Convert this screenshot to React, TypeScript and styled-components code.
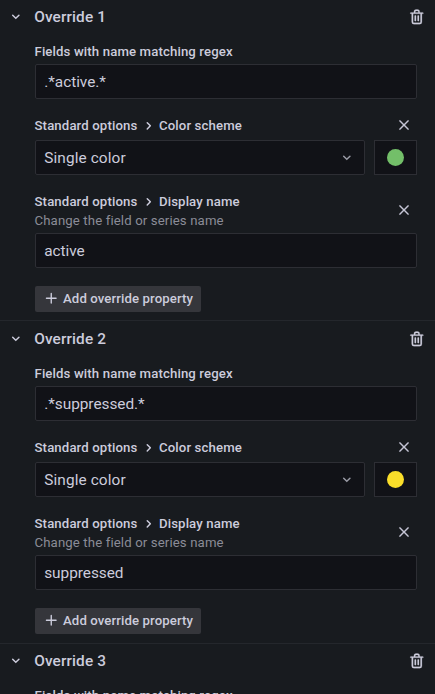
import React from 'react';
import styled, { createGlobalStyle } from 'styled-components';

const GlobalStyle = createGlobalStyle`
  * { box-sizing: border-box; }
  html, body { margin: 0; height: 100%; overflow: hidden; background: #181b1f; }
  body {
    font-family: Roboto, "Liberation Sans", sans-serif;
    color: #ccccdc;
  }
  button, input { font: inherit; color: inherit; letter-spacing: inherit; }
`;

const icons = {
  down: 'M17,9.17a1,1,0,0,0-1.41,0L12,12.71,8.46,9.17a1,1,0,0,0-1.41,0,1,1,0,0,0,0,1.42l4.24,4.24a1,1,0,0,0,1.42,0L17,10.59A1,1,0,0,0,17,9.17Z',
  right:
    'M14.83,11.29,10.59,7.05a1,1,0,0,0-1.42,0,1,1,0,0,0,0,1.41L12.71,12,9.17,15.54a1,1,0,0,0,0,1.41,1,1,0,0,0,.71.29,1,1,0,0,0,.71-.29l4.24-4.24A1,1,0,0,0,14.83,11.29Z',
  times:
    'M13.41,12l6.3-6.29a1,1,0,1,0-1.42-1.42L12,10.59,5.71,4.29A1,1,0,0,0,4.29,5.71L10.59,12l-6.3,6.29a1,1,0,0,0,0,1.42,1,1,0,0,0,1.42,0L12,13.41l6.29,6.3a1,1,0,0,0,1.42,0,1,1,0,0,0,0-1.42Z',
  plus: 'M19,11H13V5a1,1,0,0,0-2,0v6H5a1,1,0,0,0,0,2h6v6a1,1,0,0,0,2,0V13h6a1,1,0,0,0,0-2Z',
  trash:
    'M10,18a1,1,0,0,0,1-1V11a1,1,0,0,0-2,0v6A1,1,0,0,0,10,18ZM20,6H16V5a3,3,0,0,0-3-3H11A3,3,0,0,0,8,5V6H4A1,1,0,0,0,4,8H5V19a3,3,0,0,0,3,3h8a3,3,0,0,0,3-3V8h1a1,1,0,0,0,0-2ZM10,5a1,1,0,0,1,1-1h2a1,1,0,0,1,1,1V6H10Zm7,14a1,1,0,0,1-1,1H8a1,1,0,0,1-1-1V8H17Zm-3-1a1,1,0,0,0,1-1V11a1,1,0,0,0-2,0v6A1,1,0,0,0,14,18Z',
};

const Svg = styled.svg<{ $size: number; $weight: number }>`
  display: block;
  flex: none;
  width: ${(p) => p.$size}px;
  height: ${(p) => p.$size}px;
  fill: currentColor;
  stroke: currentColor;
  stroke-width: ${(p) => p.$weight};
`;

const Icon = ({ name, size, weight = 0 }: { name: keyof typeof icons; size: number; weight?: number }) => (
  <Svg $size={size} $weight={weight} viewBox="0 0 24 24" aria-hidden="true">
    <path d={icons[name]} />
  </Svg>
);

const Panel = styled.main`
  height: 694px;
  overflow: hidden;
`;

const Group = styled.section`
  height: 322px;
  &:not(:first-child) { border-top: 1px solid #24272c; }
  &:first-child { height: 320px; }
  &:nth-child(2) { height: 323px; }
`;

const Header = styled.header`
  display: flex;
  align-items: center;
  height: 34px;
  padding: 0 9.5px 0 7px;
  ${Group}:not(:first-child) & { height: 35px; }
  ${Group}:nth-child(3) & { height: 34px; }
`;

const Title = styled.h2`
  flex: 1;
  margin: 0 0 0 9.6px;
  font-size: 15.4px;
  line-height: 22px;
  font-weight: 500;
  letter-spacing: 0.12px;
`;

const IconButton = styled.button`
  display: flex;
  padding: 0;
  border: 0;
  background: none;
`;

const RemoveIconButton = styled(IconButton)<{ $lift: number }>`
  margin-bottom: ${(p) => p.$lift}px;
`;

const Body = styled.div`
  display: flex;
  flex-direction: column;
  padding: 9px 18px 0 35px;
`;

const Label = styled.div`
  display: flex;
  align-items: center;
  height: 18px;
  margin-left: -0.5px;
  font-size: 13.2px;
  line-height: 18px;
  font-weight: 500;
  letter-spacing: 0.125px;
`;

const Separator = styled.span`
  display: flex;
  margin: 0 1.5px 0 2.5px;
`;

const Hint = styled.div`
  height: 19px;
  margin-left: -0.5px;
  font-size: 13.2px;
  line-height: 19px;
  letter-spacing: 0.125px;
  color: #8b8c97;
`;

const Input = styled.input`
  display: block;
  width: 100%;
  height: 35px;
  padding: 0 8.2px;
  border: 1px solid #2d2e34;
  border-radius: 2px;
  outline: 0;
  background: #111217;
  font-size: 15.4px;
  letter-spacing: -0.04px;
`;

const MatcherInput = styled(Input)`
  margin-top: 3px;
`;

const PropertyHead = styled.div<{ $top: number; $height: number }>`
  display: flex;
  align-items: center;
  justify-content: space-between;
  height: ${(p) => p.$height}px;
  margin-top: ${(p) => p.$top}px;
  padding-right: 6.4px;
`;

const SelectRow = styled.div`
  display: flex;
  gap: 9px;
  margin-top: 5px;
`;

const Select = styled.div`
  display: flex;
  flex: 1;
  align-items: center;
  justify-content: space-between;
  height: 35px;
  padding: 0 8.5px 0 8.2px;
  border: 1px solid #2d2e34;
  border-radius: 2px;
  background: #111217;
  font-size: 15.4px;
  letter-spacing: 0.11px;
`;

const SelectArrow = styled.span`
  padding-top: 1px;
  color: #9a9ba6;
`;

const ColorBox = styled.button`
  display: flex;
  align-items: center;
  justify-content: center;
  width: 43px;
  height: 35px;
  padding: 0;
  border: 1px solid #2d2e34;
  background: #111217;
`;

const Swatch = styled.span<{ $color: string }>`
  width: 17px;
  height: 17px;
  border-radius: 50%;
  background: ${(p) => p.$color};
`;

const ValueInput = styled(Input)`
  margin-top: 3px;
`;

const AddButton = styled.button`
  display: flex;
  align-items: center;
  align-self: flex-start;
  gap: 4px;
  width: 166px;
  height: 26px;
  margin-top: 18px;
  padding: 0 0 1px 7.5px;
  border: 0;
  border-radius: 2px;
  background: #35363b;
  font-size: 13.2px;
  font-weight: 500;
  letter-spacing: 0.1px;
  white-space: nowrap;
`;

const PathLabel = ({ name }: { name: string }) => (
  <Label>
    Standard options
    <Separator>
      <Icon name="right" size={17.6} />
    </Separator>
    {name}
  </Label>
);

const RemoveButton = ({ lift }: { lift: number }) => (
  <RemoveIconButton $lift={lift} aria-label="Remove property">
    <Icon name="times" size={14} weight={0.6} />
  </RemoveIconButton>
);

const overrides = [
  { regex: '.*active.*', color: '#73bf69', display: 'active' },
  { regex: '.*suppressed.*', color: '#fade2a', display: 'suppressed' },
  { regex: '', color: '#73bf69', display: '' },
];

export default function App() {
  return (
    <>
      <GlobalStyle />
      <Panel>
        {overrides.map((o, i) => (
          <Group key={i}>
            <Header>
              <Icon name="down" size={17.6} />
              <Title>Override {i + 1}</Title>
              <IconButton aria-label="Remove override">
                <Icon name="trash" size={17.6} weight={0.3} />
              </IconButton>
            </Header>
            <Body>
              <Label>Fields with name matching regex</Label>
              <MatcherInput defaultValue={o.regex} />
              <PropertyHead $top={18} $height={18}>
                <PathLabel name="Color scheme" />
                <RemoveButton lift={2} />
              </PropertyHead>
              <SelectRow>
                <Select>
                  Single color
                  <SelectArrow>
                    <Icon name="down" size={17.6} />
                  </SelectArrow>
                </Select>
                <ColorBox aria-label="Pick color">
                  <Swatch $color={o.color} />
                </ColorBox>
              </SelectRow>
              <PropertyHead $top={18} $height={37}>
                <div>
                  <PathLabel name="Display name" />
                  <Hint>Change the field or series name</Hint>
                </div>
                <RemoveButton lift={4} />
              </PropertyHead>
              <ValueInput defaultValue={o.display} />
              <AddButton>
                <Icon name="plus" size={16.5} />
                Add override property
              </AddButton>
            </Body>
          </Group>
        ))}
      </Panel>
    </>
  );
}
